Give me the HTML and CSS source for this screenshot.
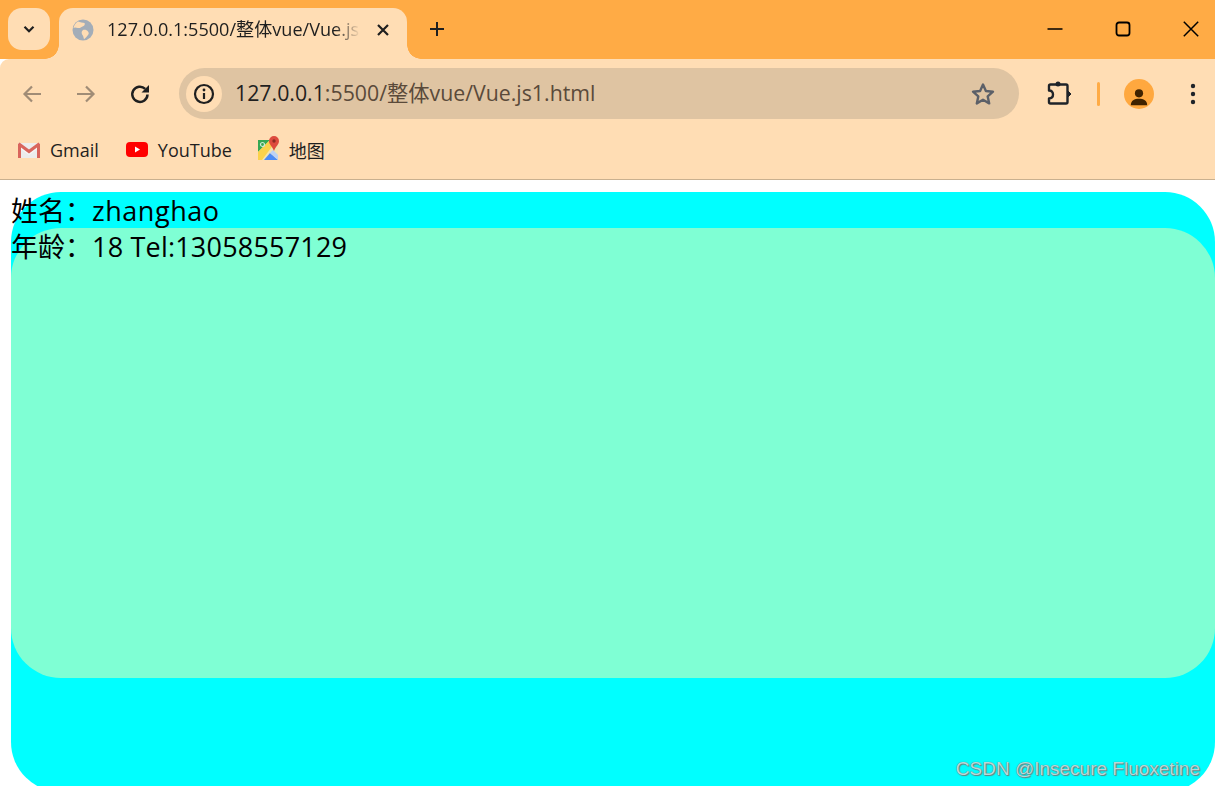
FILE: index.html
```html
<!DOCTYPE html>
<html lang="zh">
<head>
<meta charset="utf-8">
<title>Vue.js1</title>
<link rel="stylesheet" href="styles.css">
</head>
<body>
<div class="browser">
  <header class="tabstrip">
    <button class="tab-search">
      <svg width="16" height="16" viewBox="0 0 16 16"><path d="M3.500 5.800 8 10.200l4.500-4.400" fill="none" stroke="#1f1f1f" stroke-width="2.200"/></svg>
    </button>
    <div class="tab">
      <svg class="globe" width="22" height="22" viewBox="0 0 22 22"><circle cx="11" cy="11" r="10.500" fill="#a3adb8"/><path d="M6 2.500c2 1 5 1 6.500 1.500 1 1.500-.5 3-2 3.500S8 9.500 6 9 2.500 8 1.500 9C1.800 6.500 3.500 4 6 2.500ZM11 11c2-.5 4 0 5 1.500s1 2 0 3.500-2.500 3-4 4.200c-.5-1.700-.5-3-1.500-4.200s-1.500-3.500.5-5Z" fill="#ffddb4"/></svg>
      <span class="tab-title">127.0.0.1:5500/整体vue/Vue.js</span>
      <svg class="tab-close" width="12" height="12" viewBox="0 0 12 12"><path d="M1 1l10 10M11 1 1 11" stroke="#1f1f1f" stroke-width="2.200"/></svg>
    </div>
    <svg class="new-tab" width="16" height="16" viewBox="0 0 16 16"><path d="M8 1v14M1 8h14" stroke="#1f1f1f" stroke-width="2"/></svg>
    <div class="window-controls">
      <svg width="16" height="16" viewBox="0 0 16 16"><path d="M.5 8h15" stroke="#000" stroke-width="1.500"/></svg>
      <svg width="16" height="16" viewBox="0 0 16 16"><rect x="1.500" y="1.500" width="13" height="13" rx="2.500" fill="none" stroke="#000" stroke-width="1.800"/></svg>
      <svg width="16" height="16" viewBox="0 0 16 16"><path d="M.8.8l14.400 14.400M15.200.8.8 15.200" stroke="#000" stroke-width="1.500"/></svg>
    </div>
  </header>

  <div class="toolbar">
    <svg class="nav-icon" width="20" height="20" viewBox="0 0 20 20"><path d="M19 10H3M10 2.500 2.500 10l7.500 7.500" fill="none" stroke="#a08c76" stroke-width="2.200"/></svg>
    <svg class="nav-icon" width="20" height="20" viewBox="0 0 20 20"><path d="M1 10h16M10 2.500l7.500 7.500-7.500 7.500" fill="none" stroke="#a08c76" stroke-width="2.200"/></svg>
    <svg class="nav-icon" width="20" height="20" viewBox="0 0 20 20"><path d="M17.500 10.500A7.600 7.600 0 1 1 15.200 4.800" fill="none" stroke="#1f1f1f" stroke-width="2.500"/><path d="M19 1v7.500h-7.500z" fill="#1f1f1f"/></svg>
    <div class="omnibox">
      <span class="info-chip">
        <svg width="22" height="22" viewBox="0 0 22 22"><circle cx="11" cy="11" r="9" fill="none" stroke="#1f1f1f" stroke-width="2.200"/><path d="M11 10v6" stroke="#1f1f1f" stroke-width="2.200"/><circle cx="11" cy="7" r="1.400" fill="#1f1f1f"/></svg>
      </span>
      <span class="url"><span class="url-host">127.0.0.1</span>:5500/整体vue/Vue.js1.html</span>
      <svg class="star" width="26" height="26" viewBox="0 0 26 26"><path d="M13 3.500l2.900 6.500 7.100.7-5.300 4.700 1.500 7-6.200-3.600-6.200 3.600 1.500-7L3 10.700l7.100-.7z" fill="none" stroke="#5c6068" stroke-width="2.400" stroke-linejoin="round"/></svg>
    </div>
    <svg class="puzzle" width="26" height="26" viewBox="0 0 26 26"><path d="M2 5q0-1.500 1.500-1.500H19q1.500 0 1.500 1.500V21q0 1.500-1.500 1.500H3.500Q2 22.500 2 21v-3.500q4 0 4-4t-4-4z" fill="none" stroke="#1f2329" stroke-width="2.400" stroke-linejoin="round"/><circle cx="11" cy="3" r="2.500" fill="#1f2329"/><path d="M20.500 9.500l3.500 3.500-3.500 3.500z" fill="#1f2329" stroke="#1f2329" stroke-linejoin="round"/></svg>
    <span class="toolbar-sep"></span>
    <span class="avatar">
      <svg width="22" height="22" viewBox="0 0 22 22"><circle cx="11" cy="7" r="4.500" fill="#3f2200"/><path d="M2 20c0-5 4-7 9-7s9 2 9 7z" fill="#3f2200"/></svg>
    </span>
    <svg class="kebab" width="6" height="22" viewBox="0 0 6 22"><circle cx="3" cy="3" r="2.200" fill="#1f2329"/><circle cx="3" cy="11" r="2.200" fill="#1f2329"/><circle cx="3" cy="19" r="2.200" fill="#1f2329"/></svg>
  </div>

  <nav class="bookmarks">
    <a class="bookmark">
      <svg width="24" height="18" viewBox="0 0 24 18"><path d="M1 2h22v15H1z" fill="#ececec"/><path d="M1 2l11 8.500L23 2v4l-11 8L1 6z" fill="#f7f7f7"/><path d="M1 3v14h3V6.500l8 6 8-6V17h3V3l-1.500-1.500L12 8.500 2.500 1.500z" fill="#d9655c"/></svg>
      <span>Gmail</span>
    </a>
    <a class="bookmark">
      <svg width="24" height="18" viewBox="0 0 24 18"><rect x="1" y="1" width="22" height="15" rx="4" fill="#f00"/><path d="M10 5.500v6l5-3z" fill="#fff"/></svg>
      <span>YouTube</span>
    </a>
    <a class="bookmark bookmark-map">
      <svg width="22" height="24" viewBox="0 0 22 24"><path d="M0 4h15l5 2v18H0z" fill="#f3e3b0"/><path d="M0 4h12L0 16z" fill="#35a853"/><path d="M0 16 12 4l4 4L4 24H0z" fill="#fbd24b"/><path d="M6 24l6-7 8 7z" fill="#4c8bf5"/><path d="M12 17l3-3 5 5v5z" fill="#bcd2f5"/><circle cx="4.500" cy="8.500" r="2" fill="none" stroke="#cfe8d5" stroke-width="1.200"/><path d="M16 0a5 5 0 0 1 5 5c0 3.500-3.500 5.500-5 10-1.500-4.500-5-6.500-5-10a5 5 0 0 1 5-5z" fill="#dd4b3e"/><circle cx="16" cy="5" r="1.700" fill="#8f2b22"/></svg>
      <span>地图</span>
    </a>
  </nav>

  <main class="viewport">
    <section class="outer">
      <div class="line">姓名：<span class="latin-wide">zhanghao</span></div>
      <div class="inner">
        <div class="line">年龄：<span class="latin">18 Tel:13058557129</span></div>
      </div>
    </section>
    <div class="watermark">CSDN @Insecure Fluoxetine</div>
  </main>
</div>
</body>
</html>
```

FILE: styles.css
```css
* { box-sizing: border-box; }

html, body {
  margin: 0;
  height: 100%;
  overflow: hidden;
}

body {
  font-family: "Open Sans", "Noto Sans CJK SC", sans-serif;
  background: #fff;
}

.browser {
  display: flex;
  flex-direction: column;
  height: 786px;
}

.tabstrip {
  display: flex;
  align-items: flex-start;
  flex: none;
  height: 59px;
  padding: 8px 0 0 8px;
  background: #ffab45;
}

.tab-search {
  display: flex;
  align-items: center;
  justify-content: center;
  width: 42px;
  height: 42px;
  padding: 0;
  border: 0;
  border-radius: 14px;
  background: #ffddb4;
}

.tab {
  position: relative;
  display: flex;
  align-items: center;
  width: 348px;
  height: 51px;
  margin-left: 9px;
  padding: 0 18px 8px 13px;
  border-radius: 14px 14px 0 0;
  background: #ffddb4;
}

.tab::before,
.tab::after {
  content: "";
  position: absolute;
  bottom: 0;
  width: 14px;
  height: 14px;
}

.tab::before {
  left: -14px;
  background: radial-gradient(circle at 0 0, transparent 13.500px, #ffddb4 14px);
}

.tab::after {
  right: -14px;
  background: radial-gradient(circle at 100% 0, transparent 13.500px, #ffddb4 14px);
}

.globe { flex: none; }

.tab-title {
  flex: 1;
  min-width: 0;
  margin-left: 13px;
  padding-bottom: 3px;
  overflow: hidden;
  white-space: nowrap;
  font-size: 18.100px;
  color: #1f1f1f;
  -webkit-mask-image: linear-gradient(to right, #000 90%, transparent 100%);
  mask-image: linear-gradient(to right, #000 90%, transparent 100%);
}

.tab-close {
  flex: none;
  margin-left: 17px;
}

.new-tab {
  flex: none;
  margin: 13px 0 0 22px;
}

.window-controls {
  display: flex;
  gap: 52px;
  margin: 13px 16px 0 auto;
}

.toolbar {
  position: relative;
  display: flex;
  align-items: center;
  flex: none;
  height: 69px;
  padding: 0 19px 0 22px;
  background: #ffddb4;
  border-top-left-radius: 9px;
}

.nav-icon {
  flex: none;
  margin-right: 34px;
}

.omnibox {
  display: flex;
  align-items: center;
  flex: none;
  width: 840px;
  height: 51px;
  margin-left: -5px;
  padding: 0 23px 0 7px;
  border-radius: 26px;
  background: #dfc4a2;
}

.info-chip {
  display: flex;
  align-items: center;
  justify-content: center;
  flex: none;
  width: 36px;
  height: 36px;
  border-radius: 50%;
  background: #ffddb4;
}

.url {
  flex: 1;
  margin-left: 13px;
  padding-bottom: 4px;
  font-size: 21.300px;
  white-space: nowrap;
  color: #5a4a3a;
}

.url-host { color: #1f1f1f; }

.star { flex: none; }

.puzzle {
  flex: none;
  margin-left: 28px;
}

.toolbar-sep {
  flex: none;
  width: 3px;
  height: 24px;
  margin-left: 24px;
  border-radius: 2px;
  background: #ffab45;
}

.avatar {
  display: flex;
  align-items: flex-end;
  justify-content: center;
  flex: none;
  width: 30px;
  height: 30px;
  margin-left: 24px;
  padding-bottom: 2px;
  border-radius: 50%;
  background: #ffa83f;
}

.avatar svg { width: 20px; height: 20px; }

.kebab {
  flex: none;
  margin-left: 36px;
}

.bookmarks {
  display: flex;
  align-items: center;
  flex: none;
  gap: 26px;
  height: 52px;
  padding: 0 0 7px 17px;
  background: #ffddb4;
  border-bottom: 1px solid #c9b08f;
}

.bookmark {
  display: flex;
  align-items: center;
  gap: 9px;
  font-size: 18px;
  color: #1f1f1f;
}

.bookmark-map svg { margin-bottom: 4px; }

.viewport {
  position: relative;
  flex: 1;
  min-height: 0;
  padding: 12px 0 0 11px;
  overflow: hidden;
}

.outer {
  height: 600px;
  border-radius: 50px;
  background: #0ff;
}

.inner {
  height: 450px;
  border-radius: 50px;
  background: #7fffd4;
}

.line {
  height: 36px;
  font-size: 27px;
  line-height: 38px;
  color: #000;
  white-space: nowrap;
}

.latin { letter-spacing: .2px; }

.latin-wide { letter-spacing: .55px; }

.watermark {
  position: absolute;
  right: 15px;
  bottom: 6px;
  font-family: "Liberation Sans", sans-serif;
  font-size: 19px;
  color: #b9d8d8;
  text-shadow: 0 0 1px #5c6a6a, 1px 1px 1px #6f7f7f;
  white-space: nowrap;
}
```
